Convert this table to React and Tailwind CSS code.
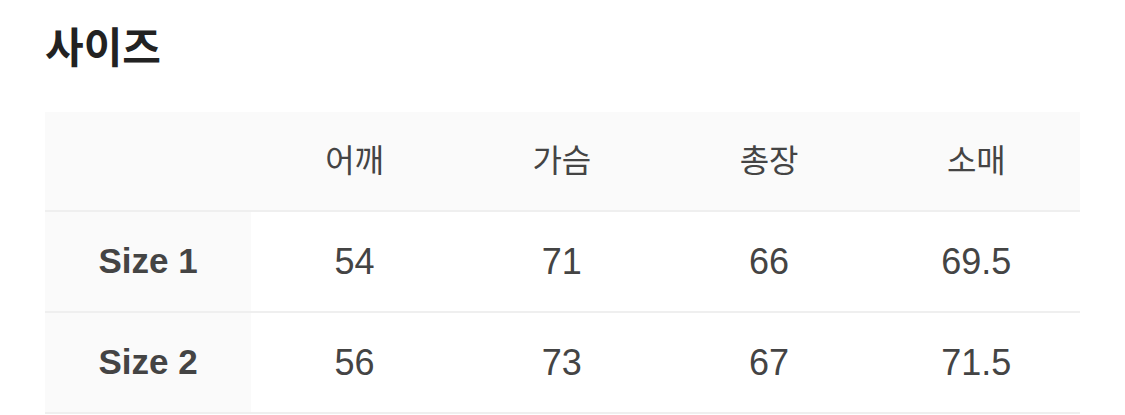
const columns = ['어깨', '가슴', '총장', '소매'];

const rows = [
  { label: 'Size 1', values: ['54', '71', '66', '69.5'] },
  { label: 'Size 2', values: ['56', '73', '67', '71.5'] },
];

const font = { fontFamily: '"Liberation Sans", "Noto Sans CJK KR", sans-serif' };

export default function App() {
  return (
    <div className="w-[1125px] h-[415px] bg-white px-[45px] overflow-hidden" style={font}>
      <div className="h-[98px] flex items-center">
        <h2 className="text-[42px] font-semibold text-[#222] leading-none">사이즈</h2>
      </div>
      <div className="mt-[14px]">
        <div className="grid grid-cols-[206px_1fr_1fr_1fr_1fr] h-[100px] bg-[#fafafa] border-b-2 border-[#efefef]">
          <div />
          {columns.map((c) => (
            <div key={c} className="flex items-center justify-center text-[32px] text-[#444]">
              {c}
            </div>
          ))}
        </div>
        {rows.map((r) => (
          <div
            key={r.label}
            className="grid grid-cols-[206px_1fr_1fr_1fr_1fr] h-[101px] border-b-2 border-[#efefef]"
          >
            <div className="flex items-center justify-center bg-[#fafafa] text-[35px] font-bold text-[#444]">
              {r.label}
            </div>
            {r.values.map((v, i) => (
              <div key={i} className="flex items-center justify-center text-[36px] text-[#444]">
                {v}
              </div>
            ))}
          </div>
        ))}
      </div>
    </div>
  );
}
